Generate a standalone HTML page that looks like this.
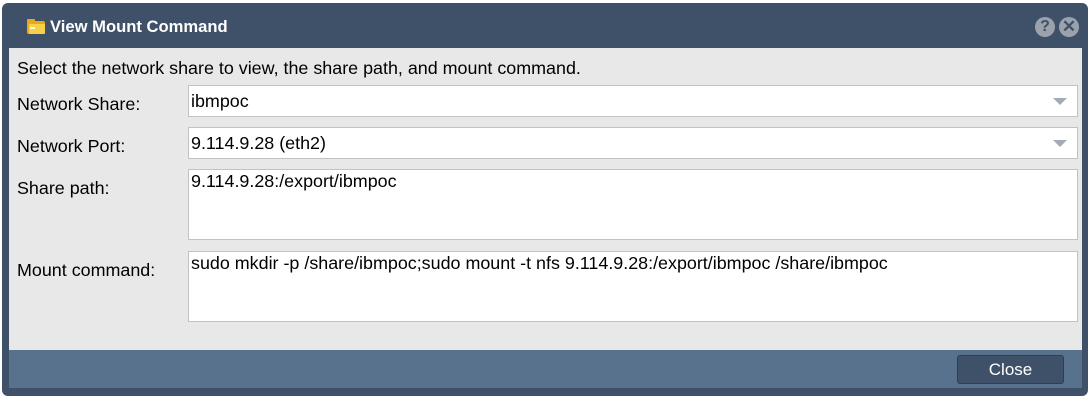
<!DOCTYPE html>
<html><head><style>
*{box-sizing:border-box;margin:0;padding:0}
body{width:1092px;height:400px;background:#fff;font-family:"Liberation Sans",Arial,sans-serif;position:relative;overflow:hidden}
.win{position:absolute;left:2px;top:3px;width:1086px;height:393px;background:#3f5168;border-radius:6px}
.title{position:absolute;left:50px;top:17px;color:#fff;font-weight:bold;font-size:16.6px}
.body{position:absolute;left:9px;top:48px;width:1073px;height:302px;background:#e8e8e8}
.foot{position:absolute;left:9px;top:350px;width:1073px;height:38px;background:#58728e}
.lbl{position:absolute;left:17px;font-size:17.9px;color:#000}
.f{position:absolute;left:188px;width:890px;background:#fff;border:1px solid #c2c2c2;font-size:17.9px;padding:2px 2px;color:#000}
.arr{position:absolute;right:10px;top:12px;width:0;height:0;border-left:7px solid transparent;border-right:7px solid transparent;border-top:7px solid #a3acb6}
.btn{position:absolute;left:957px;top:355px;width:107px;height:29px;background:#3f5168;border:1px solid #2f3e50;border-radius:3px;color:#fff;font-size:17px;text-align:center;line-height:27px}
.ic{position:absolute;top:17px;width:20px;height:20px;border-radius:50%;background:#9aa3ac;color:#3f5168;font-weight:bold;font-size:16px;text-align:center;line-height:20px}
</style></head><body>
<div class="win"></div>
<svg style="position:absolute;left:26px;top:18px" width="20" height="18" viewBox="0 0 20 18"><rect x="1" y="3" width="18" height="13" rx="2" fill="#e6a91e"/><rect x="1" y="1" width="8" height="5" rx="1" fill="#e6a91e"/><rect x="3" y="6" width="16" height="10" rx="1" fill="#f7cf48"/><rect x="4" y="9" width="5" height="2" fill="#fff8d0"/></svg>
<div class="title">View Mount Command</div>
<div class="ic" style="left:1035px">?</div>
<div class="ic" style="left:1059px;font-size:17px">✕</div>
<div class="body"></div>
<div class="foot"></div>
<div class="lbl" style="top:58px">Select the network share to view, the share path, and mount command.</div>
<div class="lbl" style="top:94px">Network Share:</div>
<div class="f" style="top:85px;height:32px;padding-top:5px">ibmpoc<div class="arr"></div></div>
<div class="lbl" style="top:136px">Network Port:</div>
<div class="f" style="top:127px;height:32px;padding-top:5px">9.114.9.28 (eth2)<div class="arr"></div></div>
<div class="lbl" style="top:178px">Share path:</div>
<div class="f" style="top:169px;height:71px;padding-top:1px">9.114.9.28:/export/ibmpoc</div>
<div class="lbl" style="top:260px">Mount command:</div>
<div class="f" style="top:251px;height:71px;padding-top:1px">sudo mkdir -p /share/ibmpoc;sudo mount -t nfs 9.114.9.28:/export/ibmpoc /share/ibmpoc</div>
<div class="btn">Close</div>
</body></html>
